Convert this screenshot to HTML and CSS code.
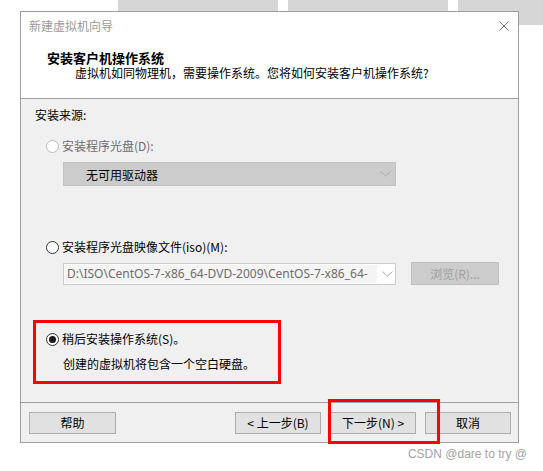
FILE: index.html
```html
<!DOCTYPE html>
<html lang="zh-CN">
<head>
    <meta charset="UTF-8">
    <meta name="viewport" content="width=device-width, initial-scale=1.0">
    <title>新建虚拟机向导</title>
    <link rel="stylesheet" href="styles.css">
</head>
<body>
    <div class="tabs">
        <span class="tab"></span>
        <span class="tab"></span>
        <span class="tab tab-last"></span>
    </div>

    <div class="wizard">
        <div class="wizard-head">
            <div class="titlebar">
                <span class="title">新建虚拟机向导</span>
                <svg class="close" width="10" height="10" viewBox="0 0 10 10">
                    <path d="M0.5 0.5 L9.5 9.5 M9.5 0.5 L0.5 9.5" stroke="#7a7a7a" stroke-width="1" fill="none"/>
                </svg>
            </div>
            <div class="head-title">安装客户机操作系统</div>
            <div class="head-sub">虚拟机如同物理机，需要操作系统。您将如何安装客户机操作系统?</div>
        </div>

        <div class="wizard-body">
            <div class="group-label">安装来源:</div>

            <div class="option disabled"><span class="radio"></span>安装程序光盘(D):</div>
            <div class="select">
                <span>无可用驱动器</span>
                <svg width="11" height="6" viewBox="0 0 11 6"><path d="M0.5 0.5 L5.5 5 L10.5 0.5" stroke="#a9a9a9" fill="none"/></svg>
            </div>

            <div class="option option-iso"><span class="radio"></span>安装程序光盘映像文件(iso)(M):</div>
            <div class="iso-row">
                <div class="combo">
                    <span class="combo-text">D:\ISO\CentOS-7-x86_64-DVD-2009\CentOS-7-x86_64-</span>
                    <svg width="11" height="6" viewBox="0 0 11 6"><path d="M0.5 0.5 L5.5 5 L10.5 0.5" stroke="#a9a9a9" fill="none"/></svg>
                </div>
                <button class="btn btn-off">浏览(R)...</button>
            </div>

            <div class="later-box">
                <div class="option"><span class="radio checked"></span>稍后安装操作系统(S)。</div>
                <div class="later-note">创建的虚拟机将包含一个空白硬盘。</div>
            </div>
        </div>

        <div class="wizard-foot">
            <button class="btn btn-help">帮助</button>
            <div class="nav">
                <button class="btn">&lt; 上一步(B)</button>
                <button class="btn">下一步(N) &gt;</button>
                <button class="btn">取消</button>
            </div>
        </div>

        <!-- red highlight drawn over the next button -->
        <div class="mark-next"></div>
    </div>

    <div class="watermark">CSDN @dare to try @</div>
</body>
</html>
```

FILE: styles.css
```css
body {
    margin: 0;
    background-color: #fff;
    font-family: "Noto Sans CJK SC", sans-serif;
    font-size: 12px;
    color: #000;
}

.tabs {
    display: flex;
    align-items: flex-start;
    height: 11px;
    padding-left: 118px;
    gap: 10px;
}

.tab {
    display: block;
    width: 160px;
    height: 11px;
    background-color: #d6d6d6;
}

.tab-last {
    width: 85px;
    height: 25px;
}

.wizard {
    position: relative;
    width: 499px;
    margin-left: 20px;
    box-sizing: border-box;
    border: 1px solid #9d9d9d;
    background-color: #f0f0f0;
}

.wizard-head {
    height: 86px;
    background-color: #fff;
    border-bottom: 1px solid #a0a0a0;
}

.titlebar {
    display: flex;
    justify-content: space-between;
    align-items: center;
    height: 28px;
    padding: 0 9px 0 8px;
}

.title {
    color: #9a9a9a;
    line-height: 28px;
}

.head-title {
    margin-top: 10px;
    padding-left: 26px;
    font-size: 13px;
    font-weight: bold;
    line-height: 15px;
}

.head-sub {
    padding-left: 54px;
    line-height: 16px;
}

.wizard-body {
    height: 304px;
    box-sizing: border-box;
    padding-top: 8px;
    border-bottom: 1px solid #a0a0a0;
}

.group-label {
    padding-left: 14px;
    line-height: 16px;
}

.option {
    display: flex;
    align-items: center;
    gap: 3px;
    height: 16px;
    line-height: 16px;
    margin-top: 15px;
    padding-left: 25px;
}

.option.disabled {
    color: #6d6d6d;
}

.option-iso {
    margin-top: 53px;
}

.radio {
    display: flex;
    align-items: center;
    justify-content: center;
    width: 13px;
    height: 13px;
    box-sizing: border-box;
    border: 1px solid #333;
    border-radius: 50%;
    background-color: #fff;
}

.disabled .radio {
    border-color: #bcbcbc;
}

.radio.checked::after {
    content: "";
    width: 7px;
    height: 7px;
    border-radius: 50%;
    background-color: #1a1a1a;
}

.select {
    display: flex;
    justify-content: space-between;
    align-items: center;
    width: 333px;
    height: 24px;
    box-sizing: border-box;
    margin: 8px 0 0 42px;
    padding: 0 4px 0 22px;
    background-color: #cccccc;
    border: 1px solid #c2c2c2;
}

.iso-row {
    display: flex;
    align-items: flex-start;
    gap: 15px;
    margin: 8px 0 0 42px;
}

.combo {
    display: flex;
    align-items: center;
    width: 333px;
    height: 22px;
    box-sizing: border-box;
    border: 1px solid #cbcbcb;
    background-color: #fff;
}

.combo-text {
    width: 310px;
    margin-left: 1px;
    padding-left: 2px;
    overflow: hidden;
    white-space: nowrap;
    font-family: "Noto Sans", "Noto Sans CJK SC", sans-serif;
    font-size: 12px;
    line-height: 18px;
    color: #6d6d6d;
    background-color: #f4f4f4;
}

.combo svg {
    margin-left: 5px;
}

.btn {
    width: 86px;
    height: 22px;
    box-sizing: border-box;
    padding: 0;
    border: 1px solid #adadad;
    background-color: #e1e1e1;
    font-family: "Noto Sans CJK SC", sans-serif;
    font-size: 12px;
    line-height: 20px;
    color: #000;
}

.btn-off {
    width: 88px;
    margin-top: -1px;
    height: 23px;
    background-color: #cccccc;
    border-color: #bfbfbf;
    color: #a0a0a0;
}

.later-box {
    width: 248px;
    height: 64px;
    box-sizing: border-box;
    margin: 35px 0 0 12px;
    padding: 8px 0 0 10px;
    border: 3px solid #f00;
}

.later-box .option {
    margin-top: 0;
    padding-left: 0;
}

.later-note {
    margin-top: 9px;
    padding-left: 17px;
    line-height: 16px;
}

.wizard-foot {
    display: flex;
    justify-content: space-between;
    align-items: flex-start;
    height: 39px;
    box-sizing: border-box;
    padding: 9px 7px 0 8px;
}

.btn-help {
    width: 87px;
}

.nav {
    display: flex;
    gap: 9px;
}

.mark-next {
    position: absolute;
    left: 307px;
    top: 387px;
    width: 112px;
    height: 45px;
    box-sizing: border-box;
    border: 3px solid #f00;
}

.watermark {
    padding-right: 16px;
    text-align: right;
    font-family: "Liberation Sans", Arial, sans-serif;
    font-size: 12px;
    line-height: 22px;
    color: #a3a3a3;
}
```
